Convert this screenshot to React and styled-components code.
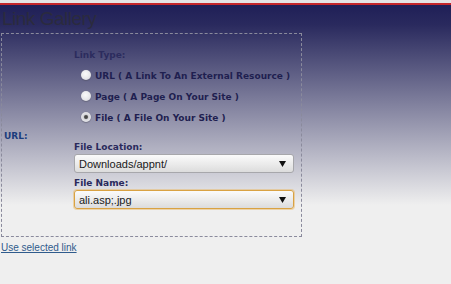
import React, { useState } from 'react';
import styled, { createGlobalStyle } from 'styled-components';

const GlobalStyle = createGlobalStyle`
    html, body {
        margin: 0;
        padding: 0;
        background: #efefef;
    }
    body {
        font-family: "Liberation Sans", Arial, sans-serif;
    }
`;

const LINK_TYPES = [
    { id: 'url', label: 'URL ( A Link To An External Resource )' },
    { id: 'page', label: 'Page ( A Page On Your Site )' },
    { id: 'file', label: 'File ( A File On Your Site )' },
];

const App = () => {
    const [linkType, setLinkType] = useState('file');

    return (
        <Page>
            <GlobalStyle />
            <TopStrip />
            <Main>
                <Title>Link Gallery</Title>

                {/* 링크 선택 박스 */}
                <Box>
                    <SideLabel>URL:</SideLabel>
                    <Fields>
                        <RowLabel>Link Type:</RowLabel>
                        {LINK_TYPES.map((type) => (
                            <RadioRow key={type.id} onClick={() => setLinkType(type.id)}>
                                <Radio $checked={linkType === type.id} />
                                <RadioText>{type.label}</RadioText>
                            </RadioRow>
                        ))}

                        <FieldLabel $first>File Location:</FieldLabel>
                        <Select>
                            <SelectText>Downloads/appnt/</SelectText>
                            <Arrow />
                        </Select>

                        <FieldLabel>File Name:</FieldLabel>
                        <Select $focused>
                            <SelectText>ali.asp;.jpg</SelectText>
                            <Arrow />
                        </Select>
                    </Fields>
                </Box>

                <UseLink href="#">Use selected link</UseLink>
            </Main>
        </Page>
    );
};

const Arrow = () => (
    <ArrowIcon viewBox="0 0 7 6" width="7" height="6">
        <path d="M0 0 H7 L3.5 6 Z" fill="#111" />
    </ArrowIcon>
);

const Page = styled.div`
    width: 100%;
    min-height: 284px;
`;

const TopStrip = styled.div`
    height: 3px;
    background: #e4e4e4;
    border-bottom: 2px solid #c4262b;
`;

const Main = styled.div`
    min-height: 279px;
    background: linear-gradient(to bottom, #1f1f57 0px, #2a2a5e 20px, #efefef 200px) no-repeat #efefef;
    overflow: hidden;
`;

const Title = styled.h1`
    margin: 0;
    height: 28px;
    padding: 3px 0 0 2px;
    box-sizing: border-box;
    font-family: "Liberation Sans", Arial, sans-serif;
    font-weight: normal;
    font-size: 19px;
    line-height: 22px;
    letter-spacing: -0.5px;
    color: #2b2b3e;
`;

const Box = styled.div`
    margin-left: 1px;
    width: 301px;
    height: 204px;
    box-sizing: border-box;
    border: 1px dashed #8a8a9c;
    display: grid;
    grid-template-columns: 72px 1fr;
    align-items: center;
`;

const SideLabel = styled.div`
    padding-left: 2px;
    padding-top: 1px;
    font-family: "DejaVu Sans", Verdana, sans-serif;
    font-weight: bold;
    font-size: 9px;
    color: #1b3c7c;
`;

const Fields = styled.div`
    display: flex;
    flex-direction: column;
    align-items: flex-start;
    padding: 11px 5px 28px 0;
    align-self: stretch;
`;

const RowLabel = styled.div`
    height: 21px;
    line-height: 21px;
    font-family: "DejaVu Sans", Verdana, sans-serif;
    font-weight: bold;
    font-size: 9px;
    color: #2c2c5e;
`;

const RadioRow = styled.div`
    height: 21px;
    display: flex;
    align-items: center;
    padding-left: 7px;
    cursor: pointer;
`;

const Radio = styled.span`
    width: 10px;
    height: 10px;
    margin: 0 4px 3px 0;
    border-radius: 50%;
    background: ${(props) =>
        props.$checked
            ? 'radial-gradient(circle, #3a3a3a 0, #555 1.5px, #d8d8dc 2.6px, #e2e2e6 60%, #c4c4cc 100%)'
            : 'radial-gradient(circle at 45% 40%, #fafafa 0, #e8e8eb 55%, #c8c8cf 100%)'};
    box-shadow: 0 0 0 0.5px rgba(120, 120, 140, 0.5), 0 1px 1px rgba(0, 0, 0, 0.2);
`;

const RadioText = styled.span`
    font-family: "DejaVu Sans", Verdana, sans-serif;
    font-weight: bold;
    font-size: 9px;
    line-height: 21px;
    color: #1f1f50;
`;

const FieldLabel = styled.div`
    margin-top: ${(props) => (props.$first ? '12px' : '4px')};
    line-height: 12px;
    font-family: "DejaVu Sans", Verdana, sans-serif;
    font-weight: bold;
    font-size: 9px;
    color: #2a2a5c;
`;

const Select = styled.div`
    margin-top: 1px;
    width: 220px;
    height: 19px;
    box-sizing: border-box;
    display: flex;
    align-items: center;
    justify-content: space-between;
    padding: 0 7px 0 4px;
    border: 1px solid ${(props) => (props.$focused ? '#d9a243' : '#a7a7ab')};
    box-shadow: ${(props) => (props.$focused ? '0 0 0 1px rgba(232, 178, 84, 0.45)' : 'none')};
    border-radius: 3px;
    background: linear-gradient(to bottom, #fbfbfb, #e9e9e9 60%, #dcdcdc);
`;

const SelectText = styled.span`
    font-family: "Liberation Sans", Arial, sans-serif;
    font-size: 11px;
    color: #1a1a1a;
`;

const ArrowIcon = styled.svg`
    display: block;
`;

const UseLink = styled.a`
    display: inline-block;
    margin: 4px 0 0 1px;
    font-family: "Liberation Sans", Arial, sans-serif;
    font-size: 10px;
    line-height: 12px;
    color: #2f5b8c;
    text-decoration: underline;
`;

export default App;
